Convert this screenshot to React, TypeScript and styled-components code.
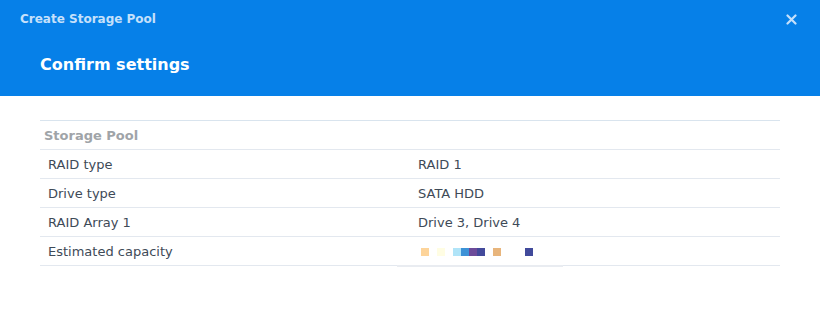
import styled, {createGlobalStyle} from "styled-components";

const GlobalStyle = createGlobalStyle`
  html, body {
    margin: 0;
    padding: 0;
    background: #fff;
  }
  body {
    font-family: "DejaVu Sans", Verdana, sans-serif;
  }
`;

const Dialog = styled.div`
  width: 820px;
  height: 323px;
  background: #fff;
  overflow: hidden;
`;

const Header = styled.header`
  background: #0680e8;
  height: 96px;
  display: flex;
  flex-direction: column;
`;

const TitleBar = styled.div`
  display: flex;
  align-items: center;
  justify-content: space-between;
  height: 38px;
  padding: 0 23px 0 20px;
`;

const WindowTitle = styled.span`
  font-size: 12px;
  font-weight: bold;
  color: #c5e0fb;
`;

const CloseButton = styled.button`
  border: none;
  background: none;
  padding: 0;
  width: 12px;
  height: 12px;
  display: flex;
  align-items: center;
  justify-content: center;
  cursor: pointer;
`;

const StepTitle = styled.h1`
  margin: 0;
  padding: 17px 40px 0;
  font-size: 16px;
  font-weight: bold;
  color: #fff;
`;

const Body = styled.div`
  padding: 24px 40px 0;
`;

const Table = styled.div`
  border-top: 1px solid #d9e4ee;
`;

const Row = styled.div<{ $section?: boolean }>`
  display: grid;
  grid-template-columns: 370px 1fr;
  height: 28px;
  align-items: center;
  border-bottom: 1px solid #e3e8ef;
  font-size: 13px;
  color: #3e4a57;
  padding-left: ${props => props.$section ? "4px" : "8px"};
  ${props => props.$section && `
    font-weight: bold;
    color: #a0a4a8;
  `}
`;

const Value = styled.span`
  display: flex;
  align-items: center;
`;

const Blocks = styled.span`
  position: relative;
  display: flex;
  height: 8px;
  margin-top: 2px;
  margin-left: 3px;
`;

const Block = styled.span<{ $color: string; $gap: number }>`
  width: 8px;
  height: 8px;
  margin-left: ${props => props.$gap}px;
  background: ${props => props.$color};
`;

const Underline = styled.span`
  position: absolute;
  left: -24px;
  top: 17px;
  width: 166px;
  height: 2px;
  background: #e9ecf1;
`;

const blocks: { color: string; gap: number }[] = [
    {color: "#fdd49a", gap: 0},
    {color: "#fffde3", gap: 8},
    {color: "#b0e4f8", gap: 8},
    {color: "#3c92d7", gap: 0},
    {color: "#6c4b9a", gap: 0},
    {color: "#434a9b", gap: 0},
    {color: "#e8b57c", gap: 8},
    {color: "#414a9b", gap: 24},
];

const rows = [
    {label: "RAID type", value: "RAID 1"},
    {label: "Drive type", value: "SATA HDD"},
    {label: "RAID Array 1", value: "Drive 3, Drive 4"},
];

function App() {
    return (
        <Dialog>
            <GlobalStyle/>
            <Header>
                <TitleBar>
                    <WindowTitle>Create Storage Pool</WindowTitle>
                    <CloseButton type="button" aria-label="Close">
                        <svg width="11" height="11" viewBox="0 0 11 11">
                            <path d="M1.5 1.5 L9.5 9.5 M9.5 1.5 L1.5 9.5" stroke="#c5e0fb" strokeWidth="2.2" strokeLinecap="round"/>
                        </svg>
                    </CloseButton>
                </TitleBar>
                <StepTitle>Confirm settings</StepTitle>
            </Header>
            <Body>
                <Table>
                    <Row $section>Storage Pool</Row>
                    {
                        rows.map(row => (
                            <Row key={row.label}>
                                <span>{row.label}</span>
                                <Value>{row.value}</Value>
                            </Row>
                        ))
                    }
                    <Row>
                        <span>Estimated capacity</span>
                        <Value>
                            <Blocks>
                                {blocks.map((b, i) => <Block key={i} $color={b.color} $gap={b.gap}/>)}
                                <Underline/>
                            </Blocks>
                        </Value>
                    </Row>
                </Table>
            </Body>
        </Dialog>
    );
}

export default App;
